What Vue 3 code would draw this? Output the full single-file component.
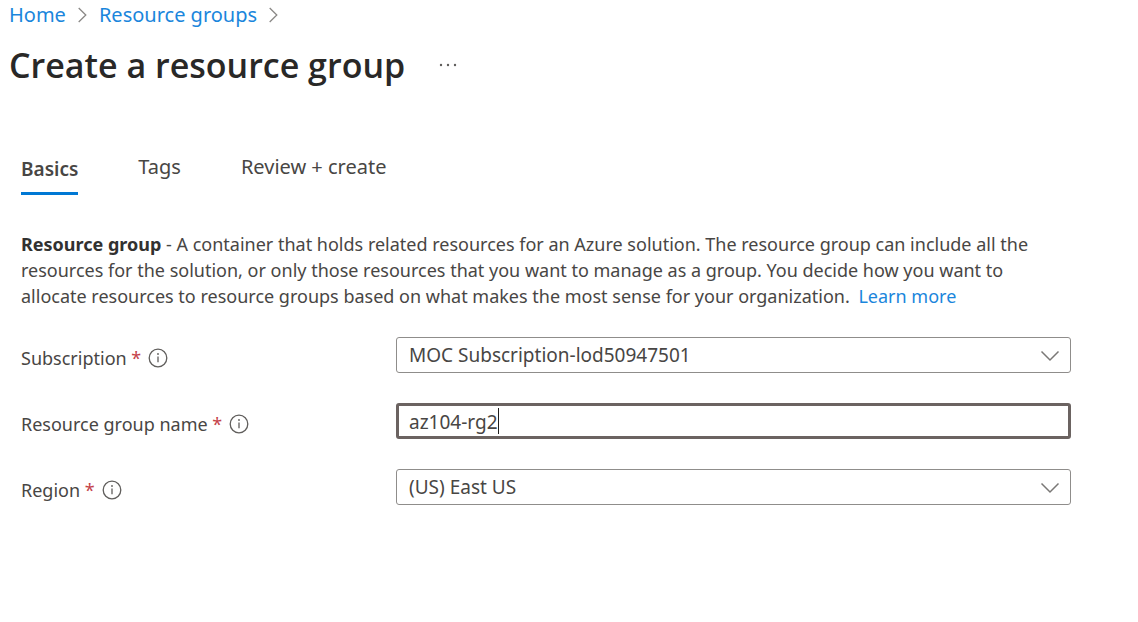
<script setup>
import { ref } from 'vue'

const tabs = ['Basics', 'Tags', 'Review + create']
const active = ref('Basics')
const fields = [
  { id: 'subscription', label: 'Subscription', type: 'select', value: 'MOC Subscription-lod50947501' },
  { id: 'group-name', label: 'Resource group name', type: 'text', value: 'az104-rg2' },
  { id: 'region', label: 'Region', type: 'select', value: '(US) East US' }
]
const name = ref('az104-rg2')
</script>

<template>
  <main class="page">
    <nav class="crumbs" aria-label="Breadcrumb">
      <template v-for="c in ['Home', 'Resource groups']" :key="c">
        <a href="#">{{ c }}</a>
        <svg class="sep" viewBox="0 0 9 16" aria-hidden="true"><path d="M0.7 1 L7.8 8 L0.7 15" /></svg>
      </template>
    </nav>

    <header class="heading">
      <h1>Create a resource group</h1>
      <button class="more" type="button" aria-label="More actions">
        <svg viewBox="0 0 18 4" aria-hidden="true">
          <circle cx="2" cy="2" r="1.2" /><circle cx="9" cy="2" r="1.2" /><circle cx="16" cy="2" r="1.2" />
        </svg>
      </button>
    </header>

    <div class="content">
      <div class="tabs" role="tablist">
        <button
          v-for="t in tabs"
          :key="t"
          type="button"
          role="tab"
          class="tab"
          :class="{ on: t === active }"
          :aria-selected="t === active"
          @click="active = t"
        >{{ t }}</button>
      </div>

      <p class="intro">
        <strong>Resource group</strong> - A container that holds related resources for an Azure solution. The resource group can include all the resources for the solution, or only those resources that you want to manage as a group. You decide how you want to allocate resources to resource groups based on what makes the most sense for your organization. <a class="learn" href="#">Learn more</a>
      </p>

      <form class="form" @submit.prevent>
        <div v-for="f in fields" :key="f.id" class="row">
          <div class="caption">
            <label :for="f.id">{{ f.label }} <span class="star">*</span></label>
            <svg class="info" viewBox="0 0 20 20" aria-hidden="true">
              <circle class="ring" cx="10" cy="10" r="8.8" />
              <path class="stem" d="M10 8.4 V14.2" />
              <circle class="dot" cx="10" cy="6" r="0.9" />
            </svg>
          </div>
          <div v-if="f.type === 'select'" class="control">
            <select :id="f.id" class="box">
              <option>{{ f.value }}</option>
            </select>
            <svg class="chevron" viewBox="0 0 20 12" aria-hidden="true"><path d="M1.5 1.5 L10 10 L18.5 1.5" /></svg>
          </div>
          <div v-else class="control">
            <input :id="f.id" v-model="name" class="box focused" type="text" spellcheck="false" autocomplete="off" />
            <span class="typed" aria-hidden="true"><span class="ghost">{{ name }}</span></span>
          </div>
        </div>
      </form>
    </div>
  </main>
</template>

<style>
body {
  background: #fff;
}
</style>

<style scoped>
.page {
  font-family: "Noto Sans", "Open Sans", sans-serif;
  font-size: 18px;
  line-height: 26px;
  color: #484644;
  padding: 2px 67px 32px 9px;
}
a {
  color: #1a86dc;
  text-decoration: none;
}
.crumbs {
  display: flex;
  align-items: center;
  gap: 12px;
  font-size: 20px;
}
.sep {
  width: 9px;
  height: 16px;
}
.sep path {
  fill: none;
  stroke: #8a8886;
  stroke-width: 1.3;
}
.heading {
  display: flex;
  align-items: center;
  gap: 34px;
  margin-top: 14px;
}
h1 {
  margin: 0;
  font-family: "Open Sans", "Noto Sans", sans-serif;
  font-size: 34px;
  line-height: 46px;
  font-weight: 600;
  color: #292827;
}
.more {
  display: flex;
  padding: 0;
  border: 0;
  background: none;
}
.more svg {
  width: 18px;
  height: 4px;
  fill: #605e5c;
}
.content {
  padding-left: 12px;
}
.tabs {
  display: flex;
  gap: 60px;
  margin-top: 62px;
  font-size: 20px;
}
.tab {
  font: inherit;
  color: inherit;
  padding: 4px 0 12px;
  border: 0;
  border-bottom: 3px solid transparent;
  background: none;
}
.tab.on {
  padding: 6px 0 10px;
  font-size: 19px;
  font-weight: 600;
  border-bottom-color: #0078d4;
}
.intro {
  margin: 36px 0 0;
}
.intro strong {
  color: #323130;
}
.learn {
  margin-left: 4px;
}
.form {
  display: flex;
  flex-direction: column;
  gap: 30px;
  margin-top: 28px;
}
.row {
  display: grid;
  grid-template-columns: 375px 1fr;
  align-items: center;
}
.caption {
  display: flex;
  align-items: center;
  gap: 7px;
  padding-top: 6px;
}
.star {
  color: #c4424a;
}
.info {
  width: 20px;
  height: 20px;
}
.info .ring,
.info .stem {
  fill: none;
  stroke: #605e5c;
  stroke-width: 1.3;
}
.info .dot {
  fill: #605e5c;
}
.control {
  position: relative;
  font-size: 19px;
}
.box {
  display: block;
  box-sizing: border-box;
  width: 100%;
  height: 36px;
  margin: 0;
  padding: 0 12px;
  border: 1px solid #8f8d8b;
  border-radius: 3px;
  outline: 0;
  background: #fff;
  font: inherit;
  color: inherit;
  appearance: none;
}
.box.focused {
  padding: 2px 10px 0;
  border: 3px solid #6b6361;
}
.typed {
  position: absolute;
  top: 5px;
  left: 13px;
  pointer-events: none;
}
.ghost {
  display: block;
  color: transparent;
  border-right: 1px solid #201f1e;
}
.chevron {
  position: absolute;
  right: 11px;
  top: 13px;
  width: 20px;
  height: 12px;
  pointer-events: none;
}
.chevron path {
  fill: none;
  stroke: #7a7876;
  stroke-width: 1.5;
}
</style>
